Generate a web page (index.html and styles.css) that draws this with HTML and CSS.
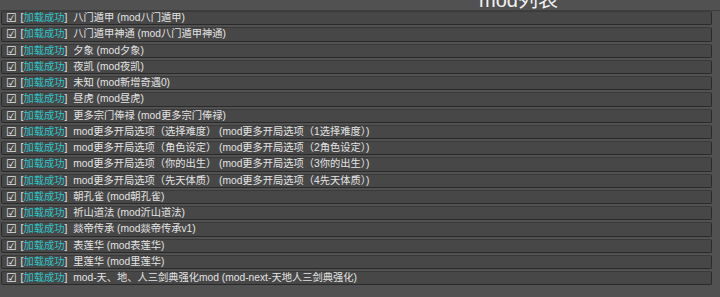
FILE: index.html
```html
<!DOCTYPE html>
<html lang="zh">
<head>
  <meta charset="UTF-8" />
  <title>mod列表</title>
  <link rel="stylesheet" href="styles.css">
</head>
<body>
  <div class="title">mod列表</div>
  <ul class="mods">
    <li><span class="chk">☑</span> [<span class="ok">加载成功</span>] <span class="name">八门遁甲 (mod八门遁甲)</span></li>
    <li><span class="chk">☑</span> [<span class="ok">加载成功</span>] <span class="name">八门遁甲神通 (mod八门遁甲神通)</span></li>
    <li><span class="chk">☑</span> [<span class="ok">加载成功</span>] <span class="name">夕象 (mod夕象)</span></li>
    <li><span class="chk">☑</span> [<span class="ok">加载成功</span>] <span class="name">夜凯 (mod夜凯)</span></li>
    <li><span class="chk">☑</span> [<span class="ok">加载成功</span>] <span class="name">未知 (mod新增奇遇0)</span></li>
    <li><span class="chk">☑</span> [<span class="ok">加载成功</span>] <span class="name">昼虎 (mod昼虎)</span></li>
    <li><span class="chk">☑</span> [<span class="ok">加载成功</span>] <span class="name">更多宗门俸禄 (mod更多宗门俸禄)</span></li>
    <li><span class="chk">☑</span> [<span class="ok">加载成功</span>] <span class="name">mod更多开局选项（选择难度） (mod更多开局选项（1选择难度）)</span></li>
    <li><span class="chk">☑</span> [<span class="ok">加载成功</span>] <span class="name">mod更多开局选项（角色设定） (mod更多开局选项（2角色设定）)</span></li>
    <li><span class="chk">☑</span> [<span class="ok">加载成功</span>] <span class="name">mod更多开局选项（你的出生） (mod更多开局选项（3你的出生）)</span></li>
    <li><span class="chk">☑</span> [<span class="ok">加载成功</span>] <span class="name">mod更多开局选项（先天体质） (mod更多开局选项（4先天体质）)</span></li>
    <li><span class="chk">☑</span> [<span class="ok">加载成功</span>] <span class="name">朝孔雀 (mod朝孔雀)</span></li>
    <li><span class="chk">☑</span> [<span class="ok">加载成功</span>] <span class="name">祈山道法 (mod沂山道法)</span></li>
    <li><span class="chk">☑</span> [<span class="ok">加载成功</span>] <span class="name">燚帝传承 (mod燚帝传承v1)</span></li>
    <li><span class="chk">☑</span> [<span class="ok">加载成功</span>] <span class="name">表莲华 (mod表莲华)</span></li>
    <li><span class="chk">☑</span> [<span class="ok">加载成功</span>] <span class="name">里莲华 (mod里莲华)</span></li>
    <li><span class="chk">☑</span> [<span class="ok">加载成功</span>] <span class="name">mod-天、地、人三剑典强化mod (mod-next-天地人三剑典强化)</span></li>
  </ul>
</body>
</html>
```

FILE: styles.css
```css
body {
  margin: 0;
  background-color: #515151;
  color: #e3e3e3;
  font-family: 'Liberation Sans', 'Noto Sans CJK SC', sans-serif;
  font-size: 10.25px;
  height: 297px;
  overflow: hidden;
}
.title {
  height: 10px;
  line-height: 0;
  padding-left: 479px;
  font-size: 20px;
  color: #f2f2f2;
  border-bottom: 1px solid #3e3e3e;
}
.mods {
  list-style: none;
  margin: 0;
  padding: 0 8px 0 1px;
  display: grid;
  grid-auto-rows: 14.25px;
  row-gap: 2px;
}
.mods li {
  display: flex;
  align-items: center;
  background-color: #474747;
  border: 1px solid #2a2a2a;
  border-top-color: #3a3a3a;
  border-radius: 2px;
  padding-left: 4px;
  white-space: pre;
  line-height: 14px;
}
.chk {
  font-family: 'DejaVu Sans', sans-serif;
  font-size: 12px;
  margin-right: 1px;
}
.ok {
  color: #2ec6c9;
}
.name {
  margin-left: 3px;
}
```
